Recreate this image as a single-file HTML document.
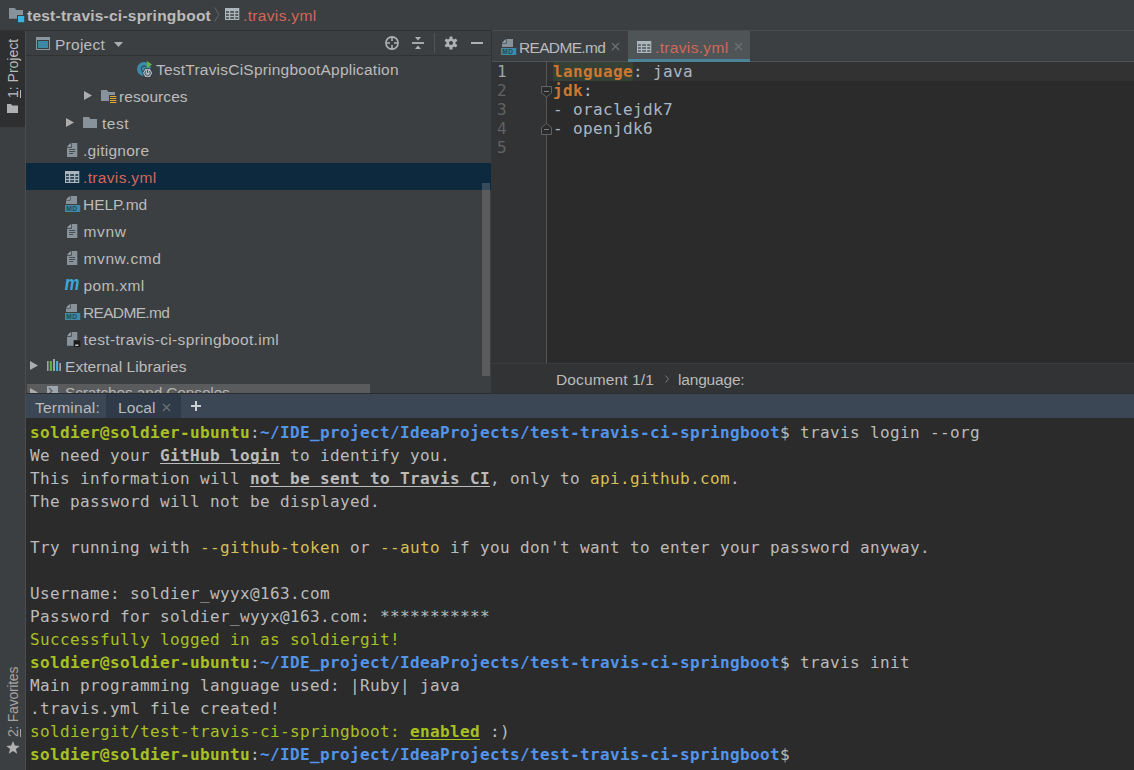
<!DOCTYPE html>
<html><head><meta charset="utf-8"><title>test-travis-ci-springboot</title>
<style>
*{box-sizing:border-box;margin:0;padding:0}
html,body{width:1134px;height:770px;overflow:hidden;background:#3c3f41}
body{position:relative;font-family:"Liberation Sans",sans-serif;font-size:15.5px;color:#bbbbbb}
.a{position:absolute}
.t{position:absolute;white-space:pre;line-height:20px;height:20px}
.mono{font-family:"DejaVu Sans Mono","Liberation Mono",monospace;font-size:16px;letter-spacing:0.367px}
svg{position:absolute;overflow:visible}
/* nav */
#nav{left:0;top:0;width:1134px;height:30px;background:#3c3f41}
#navb{left:0;top:30px;width:1134px;height:1px;background:#323232}
/* stripe */
#stripe{left:0;top:31px;width:25px;height:739px;background:#3c3f41}
#stripeb{left:25px;top:31px;width:1px;height:739px;background:#4b4c4d}
#sbtn{left:0;top:31px;width:25px;height:96px;background:#2d2f30}
.vt{position:absolute;white-space:pre;transform-origin:0 0;transform:rotate(-90deg);font-size:14px;line-height:16px;height:16px}
/* project */
#phead{left:26px;top:31px;width:465px;height:24px;background:#3c3f41}
#pheadb{left:26px;top:55px;width:465px;height:1px;background:#323232}
#tree{left:26px;top:56px;width:465px;height:337px;background:#3c3f41;overflow:hidden}
.row{position:absolute;left:0;width:465px;height:27px}
.sel{background:#0d293e}
.lbl{position:absolute;white-space:pre;line-height:27px;height:27px;top:1px}
/* editor */
#split{left:491px;top:31px;width:1px;height:31px;background:#323232}
#tabs{left:492px;top:31px;width:642px;height:30px;background:#3c3f41}
#tabst{left:492px;top:30px;width:642px;height:1px;background:#4a4c4e}
#tabsb{left:492px;top:61px;width:642px;height:1px;background:#4f5254}
#gutter{left:491px;top:62px;width:55px;height:301px;background:#313335}
#gline{left:546px;top:62px;width:1px;height:301px;background:#555555}
#ed{left:547px;top:62px;width:587px;height:301px;background:#2b2b2b}
#cur{left:547px;top:62px;width:587px;height:19px;background:#323232}
#crumb{left:491px;top:363px;width:643px;height:30px;background:#313335;border-top:1px solid #3a3d3f}
.ln{position:absolute;left:497px;color:#606366;line-height:19px;height:19px}
.code{position:absolute;left:553px;line-height:19px;height:19px;white-space:pre;color:#a9b7c6}
.kw{color:#cc7832;font-weight:bold}
/* terminal */
#thead{left:26px;top:393px;width:1108px;height:25px;background:#3b4754;border-top:1px solid #2b2d2e}
#ttab{left:106px;top:394px;width:75px;height:24px;background:#2f3b49}
#term{left:26px;top:418px;width:1108px;height:352px;background:#2b2b2b;overflow:hidden}
.tl{position:absolute;margin-top:1px;left:4px;white-space:pre;line-height:23px;height:23px;color:#bbbbbb}
.g{color:#a8c023}.b{color:#5394ec}.y{color:#d6bf55}
.B{font-weight:bold}.u{text-decoration:underline;text-decoration-thickness:1px;text-underline-offset:2px}
</style></head><body>

<svg width="0" height="0" style="position:absolute"><defs>
<g id="i-table"><path fill-rule="evenodd" fill="#abb5bc" d="M0 0H14.3V12H0Z M1 3.2H3.9V4.8H1Z M5.2 3.2H9V4.8H5.2Z M10.3 3.2H13.2V4.8H10.3Z M1 6.2H3.9V7.8H1Z M5.2 6.2H9V7.8H5.2Z M10.3 6.2H13.2V7.8H10.3Z M1 9.2H3.9V10.8H1Z M5.2 9.2H9V10.8H5.2Z M10.3 9.2H13.2V10.8H10.3Z"/></g>
<g id="i-md"><path d="M5.6 0H12V8H1V4.6H5.6Z" fill="#9aa7b0" fill-opacity="0.8"/><path d="M1 3.8L4.8 0V3.8Z" fill="#a0abb2"/><rect x="0" y="9" width="15.2" height="7" fill="#3d8aab"/><text x="1.2" y="15" font-family="Liberation Sans,sans-serif" font-size="6.6" font-weight="bold" fill="#234a5c" letter-spacing="0.5">MD</text></g>
<g id="i-txt"><path d="M4.7 0H10.3V14H0V4.7H4.7Z" fill="#9aa7b0" fill-opacity="0.8"/><path d="M0 3.8L3.8 0V3.8Z" fill="#a0abb2"/><path d="M2.2 6.5H8.2M2.2 8.5H8.2M2.2 10.5H6.2" stroke="#3c3f41" stroke-opacity="0.85" stroke-width="1"/></g>
<g id="i-folder"><path d="M0 0H6L7.5 2H14V11H0Z" fill="#9aa7b0" fill-opacity="0.8"/></g>
<g id="i-arrow"><path d="M0 0L8 4.5L0 9Z" fill="#adadad"/></g>
<g id="i-x"><path d="M0 0L7 7M7 0L0 7" stroke="#6e7174" stroke-width="1.2" fill="none"/></g>
</defs></svg>
<div class="a" id="nav"></div><div class="a" id="navb"></div>
<div class="a" id="stripe"></div><div class="a" id="sbtn"></div><div class="a" id="stripeb"></div>
<div class="a" id="phead"></div><div class="a" id="pheadb"></div>
<div class="a" id="tree">
<div class="row " style="top:-1px"><svg style="left:111px;top:6px" width="16" height="17"><circle cx="7" cy="8" r="7" fill="#3b8cab"/><path d="M9.4 6.1A2.9 2.9 0 1 0 9.4 9.9" stroke="#2a4a5a" stroke-width="1.1" fill="none"/><path d="M9.9 -0.1L15 3.4L9.9 6.9Z" fill="#5fb446"/><path d="M5.2 12L7.9 7.2H13.3L16 12L13.3 16.8H7.9Z" fill="#3c3f41"/><path d="M6 12L8.3 7.9H12.9L15.2 12L12.9 16.1H8.3Z" fill="#aebbc4"/><path d="M8.7 10.2A2.6 2.6 0 1 0 12.5 10.2M10.6 8.8V12" stroke="#3c4a52" stroke-width="1" fill="none"/></svg><span class="lbl" style="left:130px;letter-spacing:0.22px">TestTravisCiSpringbootApplication</span></div>
<div class="row " style="top:26px"><svg style="left:58px;top:9px" width="8" height="9"><use href="#i-arrow"/></svg><svg style="left:75px;top:8px" width="16" height="14"><path d="M0 0H6L7.5 2H14V5H8V11H0Z" fill="#9aa7b0" fill-opacity="0.8"/><path d="M9 6.5H15.3M9 8.5H15.3M9 10.5H15.3M9 12.5H15.3" stroke="#e8a33d" stroke-width="1"/></svg><span class="lbl" style="left:93px;letter-spacing:0.07px">resources</span></div>
<div class="row " style="top:53px"><svg style="left:40px;top:9px" width="8" height="9"><use href="#i-arrow"/></svg><svg style="left:57px;top:8px" width="14" height="11"><use href="#i-folder"/></svg><span class="lbl" style="left:76px;letter-spacing:0.55px">test</span></div>
<div class="row " style="top:80px"><svg style="left:41px;top:7px" width="10" height="14"><use href="#i-txt"/></svg><span class="lbl" style="left:57px;letter-spacing:0.26px">.gitignore</span></div>
<div class="row sel" style="top:107px"><svg style="left:39px;top:8px" width="15" height="12"><use href="#i-table"/></svg><span class="lbl" style="left:57px;color:#d1675a;letter-spacing:0.34px">.travis.yml</span></div>
<div class="row " style="top:134px"><svg style="left:39px;top:6px" width="15" height="16"><use href="#i-md"/></svg><span class="lbl" style="left:57px;letter-spacing:-0.03px">HELP.md</span></div>
<div class="row " style="top:161px"><svg style="left:41px;top:7px" width="10" height="14"><use href="#i-txt"/></svg><span class="lbl" style="left:57.5px;letter-spacing:0.68px">mvnw</span></div>
<div class="row " style="top:188px"><svg style="left:41px;top:7px" width="10" height="14"><use href="#i-txt"/></svg><span class="lbl" style="left:57.5px;letter-spacing:0.61px">mvnw.cmd</span></div>
<div class="row " style="top:215px"><svg style="left:38px;top:6px" width="16" height="14"><text x="0.8" y="13" font-family="Liberation Sans,sans-serif" font-size="19.5" font-style="italic" font-weight="bold" fill="#3ba9dd" textLength="14.6" lengthAdjust="spacingAndGlyphs">m</text></svg><span class="lbl" style="left:57.5px;letter-spacing:0.37px">pom.xml</span></div>
<div class="row " style="top:242px"><svg style="left:39px;top:6px" width="15" height="16"><use href="#i-md"/></svg><span class="lbl" style="left:57px;letter-spacing:-0.67px">README.md</span></div>
<div class="row " style="top:269px"><svg style="left:41px;top:7px" width="14" height="15"><path d="M4.7 0H10.3V8H6.5V13.7H0V4.7H4.7Z" fill="#9aa7b0" fill-opacity="0.8"/><path d="M0 3.8L3.8 0V3.8Z" fill="#a0abb2"/><rect x="7" y="8.5" width="6.3" height="6.5" fill="#1b1b1b"/><rect x="8.2" y="12.6" width="3.2" height="1.2" fill="#f0f0f0"/></svg><span class="lbl" style="left:57.5px;letter-spacing:0.36px">test-travis-ci-springboot.iml</span></div>
<div class="row " style="top:296px"><svg style="left:4px;top:9px" width="8" height="9"><use href="#i-arrow"/></svg><svg style="left:21px;top:7px" width="14" height="12"><rect x="0" y="2" width="1.6" height="10" fill="#9da3a7"/><rect x="2.8" y="2" width="2.1" height="10" fill="#62b543"/><rect x="6" y="0" width="2" height="12" fill="#9da3a7"/><rect x="9.1" y="2" width="2" height="10" fill="#40b6e0"/><rect x="12.3" y="4" width="1.7" height="8" fill="#9da3a7"/></svg><span class="lbl" style="left:39px;letter-spacing:0.05px">External Libraries</span></div>
<div class="row " style="top:323px"><svg style="left:4px;top:9px" width="8" height="9"><use href="#i-arrow"/></svg><svg style="left:21px;top:7px" width="16" height="16"><rect x="0" y="0" width="11" height="10" fill="#9aa7b0"/><path d="M2 2L5 5L2 8" stroke="#3c3f41" stroke-width="1.2" fill="none"/><circle cx="11" cy="11" r="4.5" fill="#40b6e0"/></svg><span class="lbl" style="left:39px;top:0;letter-spacing:-0.15px">Scratches and Consoles</span></div>
<div class="a" style="left:456px;top:127px;width:8px;height:193px;background:rgba(166,166,166,0.28)"></div>
<div class="a" style="left:1px;top:328px;width:343px;height:9px;background:rgba(166,166,166,0.28)"></div>
</div>
<!-- nav bar -->
<svg class="a" style="left:9px;top:8px" width="16" height="15"><path d="M0 0H5.8L7.3 2H14V7H8V10.7H0Z" fill="#9aa7b0" fill-opacity="0.8"/><rect x="9" y="8" width="6.2" height="6.2" fill="#38b3e6"/></svg>
<div class="t B" style="left:27px;top:6px;color:#bbbbbb;letter-spacing:0.23px">test-travis-ci-springboot</div>
<svg class="a" style="left:214px;top:7px" width="6" height="15"><path d="M0.5 0.5L5 7.5L0.5 14.5" stroke="#66696b" stroke-width="1" fill="none"/></svg>
<svg class="a" style="left:225px;top:8px" width="15" height="12"><use href="#i-table"/></svg>
<div class="t" style="left:243px;top:6px;color:#d1675a;letter-spacing:0.34px">.travis.yml</div>

<!-- left stripe -->
<div class="vt" style="left:5px;top:98px">1: Project</div>
<div class="a" style="left:20px;top:90px;width:1px;height:8px;background:#bbbbbb"></div>
<svg class="a" style="left:7px;top:104px" width="11" height="9"><path d="M0 0H4L5.2 1.5H11V9H0Z" fill="#afb1b3"/></svg>
<div class="vt" style="left:5px;top:737px;color:#a4a4a4;letter-spacing:-0.25px">2: Favorites</div>
<div class="a" style="left:20px;top:729px;width:1px;height:8px;background:#a4a4a4"></div>
<svg class="a" style="left:6px;top:741px" width="14" height="13"><path d="M7 0L8.8 4.6L13.7 4.9L9.9 8L11.2 12.8L7 10.1L2.8 12.8L4.1 8L0.3 4.9L5.2 4.6Z" fill="#afb1b3"/></svg>

<!-- project header -->
<svg class="a" style="left:36px;top:37px" width="14" height="13"><rect x="0.5" y="0.5" width="13" height="12" fill="#3c3f41" stroke="#8a969d" stroke-width="1"/><rect x="0" y="0" width="14" height="3" fill="#8a969d"/><rect x="2" y="4" width="10" height="7" fill="#3d89a6"/></svg>
<div class="t" style="left:55px;top:35px;letter-spacing:0.26px">Project</div>
<svg class="a" style="left:114px;top:42px" width="9" height="5"><path d="M0 0H9L4.5 5Z" fill="#adadad"/></svg>
<svg class="a" style="left:385px;top:36px" width="14" height="14"><circle cx="7" cy="7" r="6.1" fill="none" stroke="#afb1b3" stroke-width="1.6"/><path d="M7 1V5M7 9V13M1 7H5M9 7H13" stroke="#afb1b3" stroke-width="1.6"/></svg>
<svg class="a" style="left:412px;top:37px" width="12" height="12"><path d="M0 6H12" stroke="#afb1b3" stroke-width="1.8"/><path d="M3 0H9L6 3.5Z M3 12H9L6 8.5Z" fill="#afb1b3"/></svg>
<div class="a" style="left:434px;top:33px;width:1px;height:20px;background:#515456"></div>
<svg class="a" style="left:444px;top:36px" width="14" height="14" viewBox="-7 -7 14 14"><g fill="#afb1b3"><circle r="4.6"/><rect x="-1.5" y="-6.6" width="3" height="13.2" rx="0.6"/><rect x="-1.5" y="-6.6" width="3" height="13.2" rx="0.6" transform="rotate(60)"/><rect x="-1.5" y="-6.6" width="3" height="13.2" rx="0.6" transform="rotate(120)"/></g><circle r="2" fill="#3c3f41"/></svg>
<div class="a" style="left:471px;top:42px;width:12px;height:2px;background:#afb1b3"></div>

<div class="a" id="split"></div>
<div class="a" id="tabs"></div><div class="a" id="tabst"></div><div class="a" id="tabsb"></div>
<div class="a" id="gutter"></div><div class="a" id="gline"></div><div class="a" id="ed"></div><div class="a" id="cur"></div>
<div class="a" id="crumb"></div>
<!-- editor tabs -->
<div class="a" style="left:628px;top:31px;width:122px;height:31px;background:#4f5557"></div>
<div class="a" style="left:628px;top:59px;width:122px;height:3px;background:#4b8499"></div>
<svg class="a" style="left:501px;top:39px" width="15" height="16"><use href="#i-md"/></svg>
<div class="t" style="left:519px;top:38px;letter-spacing:-0.67px">README.md</div>
<svg class="a" style="left:612px;top:43px" width="7" height="7"><use href="#i-x"/></svg>
<svg class="a" style="left:637px;top:41px" width="15" height="12"><use href="#i-table"/></svg>
<div class="t" style="left:655px;top:38px;color:#d1675a;letter-spacing:0.34px">.travis.yml</div>
<svg class="a" style="left:735px;top:43px" width="7" height="7"><use href="#i-x"/></svg>
<!-- editor body -->
<div class="a" style="left:553px;top:62px;width:80px;height:19px;background:#344134"></div>
<div class="ln mono" style="top:62px;color:#a4a3a3">1</div>
<div class="ln mono" style="top:81px">2</div>
<div class="ln mono" style="top:100px">3</div>
<div class="ln mono" style="top:119px">4</div>
<div class="ln mono" style="top:138px">5</div>
<div class="code mono" style="top:62px"><span class="kw">language</span>: java</div>
<div class="code mono" style="top:81px"><span class="kw">jdk</span>:</div>
<div class="code mono" style="top:100px">- oraclejdk7</div>
<div class="code mono" style="top:119px">- openjdk6</div>
<svg class="a" style="left:541px;top:86px" width="11" height="12"><path d="M0.5 0.5H10.5V7L5.5 11L0.5 7Z" fill="#2b2b2b" stroke="#606365" stroke-width="1"/><path d="M3 5.5H8" stroke="#7c7f81" stroke-width="1"/></svg>
<svg class="a" style="left:541px;top:123px" width="11" height="12"><path d="M0.5 11.5H10.5V4.5L5.5 0.5L0.5 4.5Z" fill="#2b2b2b" stroke="#606365" stroke-width="1"/><path d="M3 6.5H8" stroke="#7c7f81" stroke-width="1"/></svg>
<!-- breadcrumbs -->
<div class="t" style="left:556px;top:370px;letter-spacing:0.12px">Document 1/1</div>
<svg class="a" style="left:665px;top:375px" width="4" height="8"><path d="M0.5 0.5L3.5 4L0.5 7.5" stroke="#7a7d7f" stroke-width="1" fill="none"/></svg>
<div class="t" style="left:678px;top:370px;letter-spacing:-0.18px">language:</div>

<div class="a" id="thead"></div><div class="a" id="ttab"></div>
<div class="a" id="term">
<div class="tl mono" style="top:2px"><span class="g B">soldier@soldier-ubuntu</span>:<span class="b B">~/IDE_project/IdeaProjects/test-travis-ci-springboot</span>$ travis login --org</div>
<div class="tl mono" style="top:25px">We need your <span class="B u">GitHub login</span> to identify you.</div>
<div class="tl mono" style="top:48px">This information will <span class="B u">not be sent to Travis CI</span>, only to <span class="y">api.github.com</span>.</div>
<div class="tl mono" style="top:71px">The password will not be displayed.</div>
<div class="tl mono" style="top:94px"></div>
<div class="tl mono" style="top:117px">Try running with <span class="y">--github-token</span> or <span class="y">--auto</span> if you don't want to enter your password anyway.</div>
<div class="tl mono" style="top:140px"></div>
<div class="tl mono" style="top:163px">Username: soldier_wyyx@163.com</div>
<div class="tl mono" style="top:186px">Password for soldier_wyyx@163.com: ***********</div>
<div class="tl mono" style="top:209px"><span class="g">Successfully logged in as soldiergit!</span></div>
<div class="tl mono" style="top:232px"><span class="g B">soldier@soldier-ubuntu</span>:<span class="b B">~/IDE_project/IdeaProjects/test-travis-ci-springboot</span>$ travis init</div>
<div class="tl mono" style="top:255px">Main programming language used: |Ruby| java</div>
<div class="tl mono" style="top:278px">.travis.yml file created!</div>
<div class="tl mono" style="top:301px"><span class="g">soldiergit/test-travis-ci-springboot: </span><span class="g B u">enabled</span> :)</div>
<div class="tl mono" style="top:324px"><span class="g B">soldier@soldier-ubuntu</span>:<span class="b B">~/IDE_project/IdeaProjects/test-travis-ci-springboot</span>$</div>
</div>
<!-- terminal header -->
<div class="t" style="left:35px;top:398px;letter-spacing:0.23px">Terminal:</div>
<div class="t" style="left:118px;top:398px;letter-spacing:0.09px">Local</div>
<svg class="a" style="left:163px;top:404px" width="7" height="7"><use href="#i-x"/></svg>
<svg class="a" style="left:191px;top:401px" width="10" height="10"><path d="M5 0V10M0 5H10" stroke="#cdd0d3" stroke-width="2"/></svg>

</body></html>
